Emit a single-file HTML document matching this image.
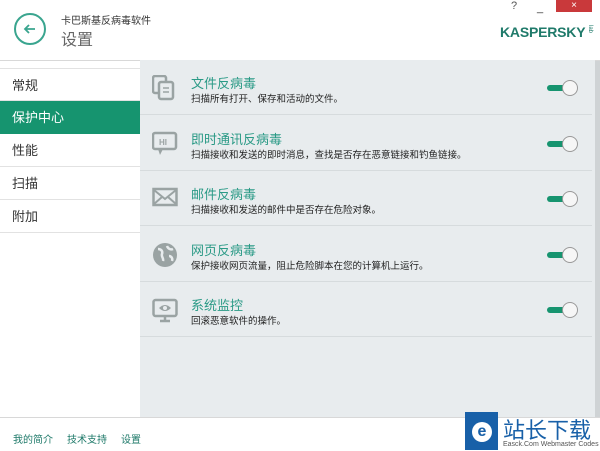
<!DOCTYPE html>
<html><head><meta charset="utf-8"><style>
*{margin:0;padding:0;box-sizing:border-box}
body{width:600px;height:451px;overflow:hidden;background:#fff;font-family:"Liberation Sans","Noto Sans CJK SC",sans-serif;position:relative}
.abs{position:absolute}
.side div{position:absolute;left:0;width:140px;height:33px;font-size:13px;color:#333;padding-left:12px;line-height:33px;border-bottom:1px solid #e2e2e2}
.content{left:140px;top:60px;width:455px;height:357px;background:#e8ecee}
.row{position:absolute;left:0;width:452px;height:55px;border-bottom:1px solid #d6dbdd}
.row .t{position:absolute;left:51px;top:13px;font-size:13px;color:#2a9a86}
.row .d{position:absolute;left:51px;top:31px;font-size:9.5px;color:#222}
.row svg.i{position:absolute;left:12px;top:15px}
.tg{position:absolute;left:407px;top:20px;width:32px;height:16px}
</style></head><body>
<div class="abs" style="left:14px;top:13px;width:32px;height:32px;border:2px solid #3aa58f;border-radius:50%"></div>
<svg class="abs" style="left:22px;top:21px" width="16" height="16" viewBox="0 0 16 16"><path d="M13 8H3M7 4L3 8l4 4" stroke="#3aa58f" stroke-width="1.8" fill="none"/></svg>
<div class="abs" style="left:61px;top:12px;font-size:10px;color:#333">卡巴斯基反病毒软件</div>
<div class="abs" style="left:61px;top:26px;font-size:16px;color:#666">设置</div>
<div class="abs" style="left:511px;top:0px;font-size:11px;color:#555">?</div>
<div class="abs" style="left:537px;top:2px;font-size:11px;color:#333">_</div>
<div class="abs" style="left:556px;top:0;width:36px;height:12px;background:#c9393b;color:#fff;font-size:10px;text-align:center;line-height:12px">×</div>
<div class="abs" style="left:500px;top:24px;font-size:14px;font-weight:bold;color:#1f7a6a;letter-spacing:-0.2px">KASPERSKY</div>
<div class="abs" style="left:586px;top:26px;font-size:6px;color:#1f7a6a;transform:rotate(90deg)">lab</div>
<div class="abs" style="left:0;top:60px;width:600px;height:1px;background:#d8d8d8"></div>
<div class="side">
<div style="top:68px;border-top:1px solid #e2e2e2">常规</div>
<div style="top:101px;background:#16946f;color:#fff;border:none">保护中心</div>
<div style="top:134px">性能</div>
<div style="top:167px">扫描</div>
<div style="top:200px">附加</div>
</div>
<div class="abs content">
<div class="row" style="top:0">
<svg class="i" width="24" height="26"><rect x="1" y="1" width="13" height="17" rx="2" fill="none" stroke="#9aa3a3" stroke-width="2.5"/><rect x="7" y="7" width="14" height="17" rx="2" fill="#e8ecee" stroke="#9aa3a3" stroke-width="2.5"/><path d="M11 13h6M11 17h6" stroke="#9aa3a3" stroke-width="1.5"/></svg>
<div class="t">文件反病毒</div><div class="d">扫描所有打开、保存和活动的文件。</div>
<svg class="tg" viewBox="0 0 32 16"><rect x="0" y="5" width="22" height="6" rx="3" fill="#16946f"/><circle cx="23" cy="8" r="7.5" fill="#f6f6f6" stroke="#999"/></svg></div>
<div class="row" style="top:56px">
<svg class="i" width="26" height="26"><rect x="1" y="2" width="23" height="16" rx="2" fill="none" stroke="#9aa3a3" stroke-width="2.5"/><path d="M6 18l2 6 3-6" fill="#9aa3a3"/><text x="7" y="14" font-size="8" font-weight="bold" fill="#9aa3a3" font-family="Liberation Sans">HI</text></svg>
<div class="t">即时通讯反病毒</div><div class="d">扫描接收和发送的即时消息，查找是否存在恶意链接和钓鱼链接。</div>
<svg class="tg" viewBox="0 0 32 16"><rect x="0" y="5" width="22" height="6" rx="3" fill="#16946f"/><circle cx="23" cy="8" r="7.5" fill="#f6f6f6" stroke="#999"/></svg></div>
<div class="row" style="top:111px">
<svg class="i" width="26" height="22"><rect x="1.5" y="3" width="23" height="16" fill="none" stroke="#9aa3a3" stroke-width="2.5"/><path d="M2 4l11 9 11-9M2 18l8-7M24 18l-8-7" stroke="#9aa3a3" stroke-width="2" fill="none"/></svg>
<div class="t">邮件反病毒</div><div class="d">扫描接收和发送的邮件中是否存在危险对象。</div>
<svg class="tg" viewBox="0 0 32 16"><rect x="0" y="5" width="22" height="6" rx="3" fill="#16946f"/><circle cx="23" cy="8" r="7.5" fill="#f6f6f6" stroke="#999"/></svg></div>
<div class="row" style="top:167px">
<svg class="i" width="26" height="26"><circle cx="13" cy="13" r="12" fill="#9aa3a3"/><path d="M6 7c3 0 5 2 4 5s2 4 1 7M15 4c1 3 4 4 6 3M17 14c2 0 4 2 3 5" stroke="#e8ecee" stroke-width="2.5" fill="none"/></svg>
<div class="t">网页反病毒</div><div class="d">保护接收网页流量，阻止危险脚本在您的计算机上运行。</div>
<svg class="tg" viewBox="0 0 32 16"><rect x="0" y="5" width="22" height="6" rx="3" fill="#16946f"/><circle cx="23" cy="8" r="7.5" fill="#f6f6f6" stroke="#999"/></svg></div>
<div class="row" style="top:222px">
<svg class="i" width="26" height="26"><rect x="1.5" y="3" width="23" height="16" rx="2" fill="none" stroke="#9aa3a3" stroke-width="2.5"/><path d="M7 11q6-6 12 0q-6 6-12 0z" fill="#9aa3a3"/><circle cx="13" cy="11" r="2" fill="#e8ecee"/><path d="M8 24h10M13 19v5" stroke="#9aa3a3" stroke-width="2.5"/></svg>
<div class="t">系统监控</div><div class="d">回滚恶意软件的操作。</div>
<svg class="tg" viewBox="0 0 32 16"><rect x="0" y="5" width="22" height="6" rx="3" fill="#16946f"/><circle cx="23" cy="8" r="7.5" fill="#f6f6f6" stroke="#999"/></svg></div>
</div>
<div class="abs" style="left:595px;top:61px;width:5px;height:356px;background:#cfd3d5"></div>
<div class="abs" style="left:0;top:417px;width:600px;height:1px;background:#d8d8d8"></div>
<div class="abs" style="left:13px;top:431px;font-size:10px;color:#1f7a6a">我的简介</div>
<div class="abs" style="left:67px;top:431px;font-size:10px;color:#1f7a6a">技术支持</div>
<div class="abs" style="left:121px;top:431px;font-size:10px;color:#1f7a6a">设置</div>
<div class="abs" style="left:465px;top:412px;width:33px;height:38px;background:#1860a8"></div>
<div class="abs" style="left:472px;top:422px;width:20px;height:20px;border-radius:50%;background:#fff;color:#1860a8;font-weight:bold;font-size:16px;text-align:center;line-height:20px">e</div>
<div class="abs" style="left:503px;top:413px;font-size:22px;color:#1860a8">站长下载</div>
<div class="abs" style="left:503px;top:441px;font-size:7px;color:#555">Easck.Com Webmaster Codes</div>
</body></html>
